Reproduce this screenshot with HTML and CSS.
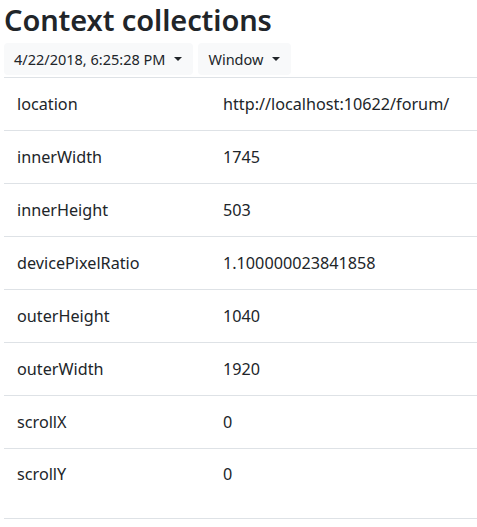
FILE: index.html
```html
<!DOCTYPE html>
<html>
<head>
<meta charset="utf-8">
<link rel="stylesheet" href="styles.css">
</head>
<body>
<div class="page">
  <h1 class="title">Context collections</h1>
  <div class="toolbar">
    <button class="btn btn-date">4/22/2018, 6:25:28 PM <span class="caret"></span></button>
    <button class="btn">Window <span class="caret"></span></button>
  </div>
  <div class="table">
    <div class="row"><div class="cell key">location</div><div class="cell val">http://localhost:10622/forum/</div></div>
    <div class="row"><div class="cell key">innerWidth</div><div class="cell val">1745</div></div>
    <div class="row"><div class="cell key">innerHeight</div><div class="cell val">503</div></div>
    <div class="row"><div class="cell key">devicePixelRatio</div><div class="cell val">1.100000023841858</div></div>
    <div class="row"><div class="cell key">outerHeight</div><div class="cell val">1040</div></div>
    <div class="row"><div class="cell key">outerWidth</div><div class="cell val">1920</div></div>
    <div class="row"><div class="cell key">scrollX</div><div class="cell val">0</div></div>
    <div class="row last"><div class="cell key">scrollY</div><div class="cell val">0</div></div>
  </div>
</div>
</body>
</html>
```

FILE: styles.css
```css
html, body {
  margin: 0;
  padding: 0;
  background: #fff;
}
body {
  font-family: "Noto Sans", "Open Sans", sans-serif;
  color: #212529;
  overflow: hidden;
}
.page {
  padding: 0 0 0 4px;
}
.title {
  margin: 0;
  font-size: 29px;
  font-weight: 600;
  line-height: 40px;
  height: 43px;
  letter-spacing: -0.1px;
}
.toolbar {
  display: flex;
  gap: 5px;
  height: 34px;
}
.btn {
  font-family: inherit;
  font-size: 14.5px;
  color: #212529;
  background: #f8f9fa;
  border: none;
  border-radius: 4px;
  height: 32px;
  padding: 0 11px 0 10px;
  display: flex;
  align-items: center;
  gap: 9px;
  cursor: pointer;
}
.caret {
  display: inline-block;
  width: 0;
  height: 0;
  border-left: 4px solid transparent;
  border-right: 4px solid transparent;
  border-top: 4px solid #212529;
}
.table {
  border-bottom: 1px solid #dee2e6;
}
.row {
  display: grid;
  grid-template-columns: 207px 1fr;
  border-top: 1px solid #dee2e6;
  height: 52px;
  align-items: center;
  font-size: 16.2px;
}
.row.last {
  height: 69px;
  align-items: start;
}
.row.last .cell {
  padding-top: 14px;
}
.cell {
  padding: 0 12px 0 13px;
  white-space: nowrap;
}
.val {
  padding-left: 12px;
}
```
